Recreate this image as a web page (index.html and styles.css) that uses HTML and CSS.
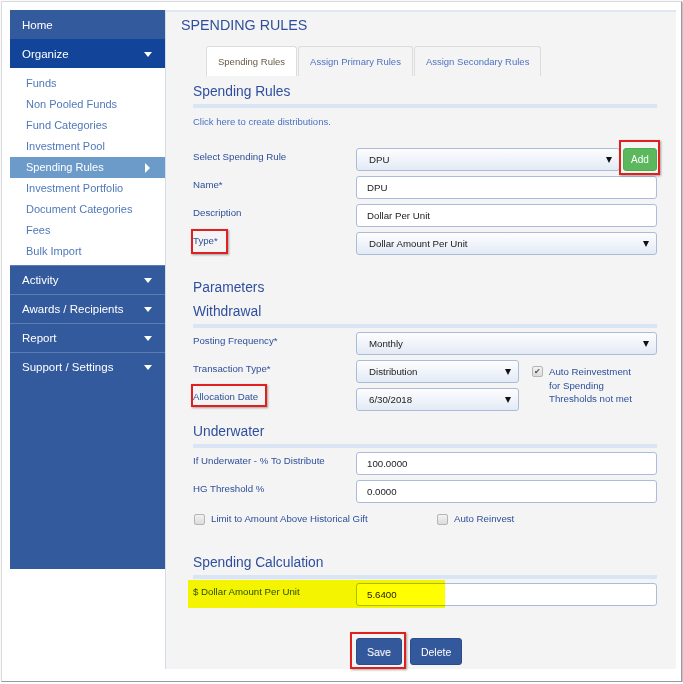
FILE: index.html
```html
<!DOCTYPE html>
<html lang="en">
<head>
  <meta charset="UTF-8" />
  <meta name="viewport" content="width=device-width, initial-scale=1.0"/>
  <title>Spending Rules</title>
  <link rel="stylesheet" href="styles.css">
</head>
<body>
  <div class="frame">
    <nav class="sidebar">
      <div class="nav-item">Home</div>
      <div class="nav-item open">Organize <span class="caret-down"></span></div>
      <ul class="submenu">
        <li>Funds</li>
        <li>Non Pooled Funds</li>
        <li>Fund Categories</li>
        <li>Investment Pool</li>
        <li class="active">Spending Rules <span class="caret-right"></span></li>
        <li>Investment Portfolio</li>
        <li>Document Categories</li>
        <li>Fees</li>
        <li>Bulk Import</li>
      </ul>
      <div class="nav-item">Activity <span class="caret-down"></span></div>
      <div class="nav-item">Awards / Recipients <span class="caret-down"></span></div>
      <div class="nav-item">Report <span class="caret-down"></span></div>
      <div class="nav-item">Support / Settings <span class="caret-down"></span></div>
    </nav>

    <main class="main">
      <h1 class="page-title">SPENDING RULES</h1>

      <div class="tabs">
        <div class="tab active">Spending Rules</div>
        <div class="tab">Assign Primary Rules</div>
        <div class="tab">Assign Secondary Rules</div>
      </div>

      <div class="content">
        <h2 class="section-title">Spending Rules</h2>
        <div class="bar"></div>
        <a class="link">Click here to create distributions.</a>

        <div class="fields first">
          <label>Select Spending Rule</label>
          <div class="wide with-btn">
            <div class="select"><span>DPU</span><span class="arrow"></span></div>
            <span class="mark mark-add"><button class="btn-add">Add</button></span>
          </div>

          <label>Name*</label>
          <input class="wide" type="text" value="DPU">

          <label>Description</label>
          <input class="wide" type="text" value="Dollar Per Unit">

          <label><span class="mark mark-type">Type*</span></label>
          <div class="wide select"><span>Dollar Amount Per Unit</span><span class="arrow"></span></div>
        </div>

        <h2 class="section-title params">Parameters</h2>
        <h2 class="section-title sub">Withdrawal</h2>
        <div class="bar"></div>

        <div class="fields">
          <label>Posting Frequency*</label>
          <div class="wide select"><span>Monthly</span><span class="arrow"></span></div>

          <label>Transaction Type*</label>
          <div class="select"><span>Distribution</span><span class="arrow"></span></div>
          <div class="check-block">
            <span class="box checked">✔</span>
            <span class="check-text">Auto Reinvestment<br>for Spending<br>Thresholds not met</span>
          </div>

          <label><span class="mark mark-alloc">Allocation Date</span></label>
          <div class="select"><span>6/30/2018</span><span class="arrow"></span></div>
        </div>

        <h2 class="section-title under">Underwater</h2>
        <div class="bar"></div>

        <div class="fields">
          <label>If Underwater - % To Distribute</label>
          <input class="wide" type="text" value="100.0000">

          <label>HG Threshold %</label>
          <input class="wide" type="text" value="0.0000">
        </div>

        <div class="checks">
          <div class="check limit"><span class="box"></span>Limit to Amount Above Historical Gift</div>
          <div class="check"><span class="box"></span>Auto Reinvest</div>
        </div>

        <h2 class="section-title calc">Spending Calculation</h2>
        <div class="bar"></div>

        <div class="fields highlighted">
          <label>$ Dollar Amount Per Unit</label>
          <input class="wide" type="text" value="5.6400">
          <div class="hilite"></div>
        </div>

        <div class="actions">
          <span class="mark mark-save"><button class="btn">Save</button></span>
          <button class="btn">Delete</button>
        </div>
      </div>
    </main>
  </div>
</body>
</html>
```

FILE: styles.css
```css
body {
  margin: 0;
  background: #fff;
  font-family: "Liberation Sans", Arial, sans-serif;
}

.frame {
  margin: 1px 0 0 1px;
  width: 681px;
  height: 681px;
  box-sizing: border-box;
  border: 1px solid #dadada;
  border-right-color: #9a9a9a;
  border-bottom-color: #9a9a9a;
  box-shadow: 1px 1px 2px rgba(0, 0, 0, 0.35);
  padding: 8px 0 0 8px;
  display: flex;
  align-items: flex-start;
}

/* sidebar */
.sidebar {
  width: 155px;
  height: 559px;
  background: #345a9e;
  flex-shrink: 0;
}

.nav-item {
  height: 29px;
  box-sizing: border-box;
  border-top: 1px solid #5d7cb4;
  padding: 0 13px 0 12px;
  display: flex;
  align-items: center;
  justify-content: space-between;
  color: #fff;
  font-size: 11.5px;
}

.nav-item:first-child {
  border-top: none;
}

.nav-item.open {
  background: #12449a;
  border-top-color: #12449a;
}

.caret-down {
  width: 0;
  height: 0;
  border-left: 4px solid transparent;
  border-right: 4px solid transparent;
  border-top: 5px solid #fff;
}

.submenu {
  list-style: none;
  margin: 0;
  padding: 5px 0 3px;
  background: #fff;
}

.submenu li {
  height: 21px;
  line-height: 21px;
  padding: 0 15px 0 16px;
  color: #4f78ba;
  font-size: 11px;
  display: flex;
  align-items: center;
  justify-content: space-between;
}

.submenu li.active {
  background: #6d9bc9;
  color: #fff;
}

.caret-right {
  width: 0;
  height: 0;
  border-top: 5px solid transparent;
  border-bottom: 5px solid transparent;
  border-left: 5px solid #fff;
}

/* main panel */
.main {
  width: 511px;
  box-sizing: border-box;
  background: #f4f4f4;
  border-top: 2px solid #dfe7f3;
  border-left: 1px solid #d3dcea;
  padding-bottom: 4px;
}

.page-title {
  margin: 4px 0 0 15px;
  font-size: 14.3px;
  line-height: 18px;
  font-weight: normal;
  color: #2f4f9e;
}

.tabs {
  display: flex;
  margin: 12px 0 0 40px;
}

.tab {
  height: 30px;
  box-sizing: border-box;
  padding: 0 11px;
  border: 1px solid #dcdcdc;
  border-bottom: none;
  border-radius: 3px 3px 0 0;
  margin-right: 1px;
  display: flex;
  align-items: center;
  font-size: 9.5px;
  color: #4d73c2;
}

.tab.active {
  background: #fff;
  color: #6a5a48;
}

.content {
  padding: 0 19px 0 27px;
}

.section-title {
  margin: 7px 0 0;
  font-size: 13.8px;
  line-height: 18px;
  font-weight: normal;
  color: #2f4f9e;
}

.section-title.params {
  margin-top: 24px;
}

.section-title.sub {
  margin-top: 6px;
}

.section-title.under {
  margin-top: 12px;
}

.section-title.calc {
  margin-top: 28px;
}

.bar {
  height: 4px;
  margin-top: 3px;
  background: #d9e4f5;
}

.link {
  display: block;
  margin-top: 7px;
  font-size: 9.5px;
  line-height: 14px;
  color: #4a70c4;
}

.fields {
  display: grid;
  grid-template-columns: 163px 163px 1fr;
  row-gap: 5px;
  margin-top: 4px;
  position: relative;
}

.fields.first {
  margin-top: 19px;
}

.fields label {
  grid-column: 1;
  padding-top: 2px;
  font-size: 9.7px;
  line-height: 14px;
  color: #2d4f9b;
}

.wide {
  grid-column: 2 / 4;
}

input,
.select {
  height: 23px;
  box-sizing: border-box;
  border: 1px solid #a9bddb;
  border-radius: 3px;
  font-family: inherit;
  font-size: 9.7px;
  color: #222;
}

input {
  padding: 0 10px;
  background: #fff;
  margin: 0;
  width: 100%;
}

.select {
  display: flex;
  align-items: center;
  justify-content: space-between;
  padding: 0 7px 0 12px;
  background: linear-gradient(#fdfdfe, #e3eaf5);
}

.arrow {
  width: 0;
  height: 0;
  border-left: 3.5px solid transparent;
  border-right: 3.5px solid transparent;
  border-top: 6px solid #111;
}

.with-btn {
  display: flex;
  gap: 3px;
}

.with-btn .select {
  flex: 1;
}

.btn-add {
  width: 34px;
  height: 23px;
  border: 1px solid #4cae4c;
  border-radius: 3px;
  background: #5cb85c;
  color: #fff;
  font-family: inherit;
  font-size: 10px;
  padding: 0;
  display: block;
}

.check-block {
  display: flex;
  align-items: flex-start;
  gap: 6px;
  margin-left: 13px;
  padding-top: 5px;
  grid-row: span 2;
}

.box {
  width: 9px;
  height: 9px;
  flex-shrink: 0;
  border: 1px solid #b5b5b5;
  border-radius: 2px;
  background: linear-gradient(#f2f2f2, #dcdcdc);
  font-size: 8px;
  line-height: 9px;
  text-align: center;
  color: #555;
}

.check-block .box {
  margin-top: 1px;
}

.check-text {
  font-size: 9.7px;
  line-height: 13.5px;
  color: #2d4f9b;
}

.checks {
  display: flex;
  margin-top: 9px;
  padding-left: 1px;
  font-size: 9.7px;
  line-height: 14px;
  color: #2d4f9b;
}

.check {
  display: flex;
  align-items: center;
  gap: 6px;
}

.check.limit {
  width: 243px;
}

.hilite {
  position: absolute;
  left: -5px;
  top: -3px;
  width: 257px;
  height: 28px;
  background: #ffff00;
  mix-blend-mode: multiply;
  pointer-events: none;
}

.actions {
  display: flex;
  gap: 8px;
  margin-top: 32px;
  padding-left: 163px;
}

.btn {
  height: 27px;
  padding: 0 10px;
  border: 1px solid #2b4c8a;
  border-radius: 3px;
  background: #34589c;
  color: #fff;
  font-family: inherit;
  font-size: 10.5px;
  display: block;
}

/* red annotation boxes */
.mark {
  position: relative;
  display: inline-block;
}

.mark::after {
  content: "";
  position: absolute;
  border: 2px solid #e01f1f;
  box-shadow: 1px 1px 2px rgba(0, 0, 0, 0.35);
  pointer-events: none;
}

.mark-add::after {
  left: -4px;
  right: -3px;
  top: -8px;
  bottom: -4px;
}

.mark-type::after {
  left: -2px;
  right: -10px;
  top: -5px;
  bottom: -6px;
}

.mark-alloc::after {
  left: -2px;
  right: -9px;
  top: -6px;
  bottom: -3px;
}

.mark-save::after {
  left: -6px;
  right: -4px;
  top: -6px;
  bottom: -4px;
}
```
